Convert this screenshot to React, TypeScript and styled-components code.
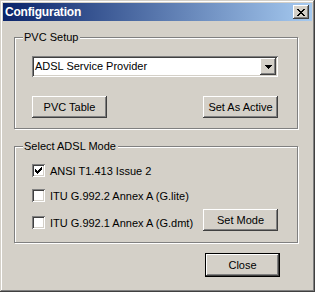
import React from 'react'
import styled, { createGlobalStyle } from 'styled-components'

const face = '#d4d0c8'

const GlobalStyle = createGlobalStyle`
  html, body {
    margin: 0;
    padding: 0;
    background: ${face};
  }
  body {
    font-family: "Liberation Sans", Arial, sans-serif;
    font-size: 11px;
    color: #000;
  }
`

const Window = styled.div`
  box-sizing: border-box;
  width: 315px;
  height: 292px;
  padding: 3px;
  display: flex;
  flex-direction: column;
  background: ${face};
  box-shadow:
    inset -1px -1px 0 #404040,
    inset 1px 1px 0 ${face},
    inset -2px -2px 0 #808080,
    inset 2px 2px 0 #fff;
`

const TitleBar = styled.div`
  height: 18px;
  display: flex;
  align-items: center;
  justify-content: space-between;
  padding: 0 3px 0 2px;
  background: linear-gradient(to right, #0a246a, #a6caf0);
`

const TitleText = styled.span`
  color: #fff;
  font-weight: bold;
  font-size: 12px;
  letter-spacing: -0.2px;
  line-height: 16px;
`

const raised = `
  background: ${face};
  box-shadow:
    inset -1px -1px 0 #404040,
    inset 1px 1px 0 #fff,
    inset -2px -2px 0 #808080,
    inset 2px 2px 0 ${face};
`

const sunken = `
  box-shadow:
    inset 1px 1px 0 #808080,
    inset -1px -1px 0 #fff,
    inset 2px 2px 0 #404040,
    inset -2px -2px 0 ${face};
`

const CaptionButton = styled.div`
  width: 16px;
  height: 14px;
  display: flex;
  align-items: center;
  justify-content: center;
  ${raised}
`

const Body = styled.div`
  flex: 1;
  display: flex;
  flex-direction: column;
  padding: 16px 14px 0 11px;
`

const Group = styled.div<{ $gap?: number }>`
  position: relative;
  margin-top: ${({ $gap }) => $gap ?? 0}px;
  border: 1px solid #808080;
  box-shadow: inset 1px 1px 0 #fff, 1px 1px 0 #fff;
  display: flex;
  flex-direction: column;
`

const GroupCaption = styled.span`
  position: absolute;
  top: -7px;
  left: 8px;
  padding: 0 2px 0 1px;
  background: ${face};
  line-height: 13px;
  white-space: nowrap;
`

const SetupContent = styled.div`
  padding: 18px 19px 10px 17px;
  display: flex;
  flex-direction: column;
  gap: 19px;
`

const ModeContent = styled.div`
  padding: 17px 19px 11px 17px;
  display: flex;
  flex-direction: column;
`

const Combo = styled.div`
  height: 21px;
  display: flex;
  align-items: center;
  background: #fff;
  padding: 2px;
  box-sizing: border-box;
  ${sunken}
`

const ComboText = styled.span`
  flex: 1;
  padding-left: 1px;
  line-height: 15px;
  white-space: nowrap;
`

const ComboArrow = styled.div`
  width: 16px;
  height: 17px;
  display: flex;
  align-items: center;
  justify-content: center;
  ${raised}
`

const ButtonRow = styled.div`
  display: flex;
  justify-content: space-between;
  align-items: flex-start;
`

const Button = styled.div<{ $default?: boolean }>`
  box-sizing: border-box;
  flex: none;
  width: 75px;
  height: ${({ $default }) => ($default ? 24 : 22)}px;
  display: flex;
  align-items: center;
  justify-content: center;
  white-space: nowrap;
  ${raised}
  ${({ $default }) =>
    $default &&
    `
    border: 1px solid #000;
  `}
`

const Option = styled.label<{ $top?: number }>`
  display: flex;
  align-items: center;
  gap: 5px;
  height: 13px;
  white-space: nowrap;
  margin-top: ${({ $top }) => $top ?? 0}px;
`

const Box = styled.span`
  width: 13px;
  height: 13px;
  flex: none;
  display: flex;
  align-items: center;
  justify-content: center;
  background: #fff;
  ${sunken}
`

const ModeRow = styled.div`
  display: flex;
  justify-content: space-between;
  align-items: flex-start;
  margin-top: 7px;
`

const Footer = styled.div`
  display: flex;
  justify-content: flex-end;
  padding: 10px 18px 0 0;
`

const Check = () => (
  <svg width="7" height="7" viewBox="0 0 7 7" shapeRendering="crispEdges">
    <path
      d="M6 0h1v1h-1zM5 1h2v1h-2zM0 2h1v1h-1zM4 2h3v1h-3zM0 3h2v1h-2zM3 3h3v1h-3zM0 4h5v1h-5zM1 5h3v1h-3zM2 6h1v1h-1z"
      fill="#000"
    />
  </svg>
)

const CheckOption = ({ label, checked, top }: { label: string; checked?: boolean; top?: number }) => (
  <Option $top={top}>
    <Box>{checked && <Check />}</Box>
    {label}
  </Option>
)

export default function App() {
  return (
    <>
      <GlobalStyle />
      <Window>
        <TitleBar>
          <TitleText>Configuration</TitleText>
          <CaptionButton>
            <svg width="8" height="7" viewBox="0 0 8 7" shapeRendering="crispEdges">
              <path
                d="M0 0h2v1h-2zM6 0h2v1h-2zM1 1h2v1h-2zM5 1h2v1h-2zM2 2h4v1h-4zM3 3h2v1h-2zM2 4h4v1h-4zM1 5h2v1h-2zM5 5h2v1h-2zM0 6h2v1h-2zM6 6h2v1h-2z"
                fill="#000"
              />
            </svg>
          </CaptionButton>
        </TitleBar>
        <Body>
          <Group>
            <GroupCaption>PVC Setup</GroupCaption>
            <SetupContent>
              <Combo>
                <ComboText>ADSL Service Provider</ComboText>
                <ComboArrow>
                  <svg width="7" height="4" viewBox="0 0 7 4" shapeRendering="crispEdges">
                    <path d="M0 0h7v1h-7zM1 1h5v1h-5zM2 2h3v1h-3zM3 3h1v1h-1z" fill="#000" />
                  </svg>
                </ComboArrow>
              </Combo>
              <ButtonRow>
                <Button>PVC Table</Button>
                <Button>Set As Active</Button>
              </ButtonRow>
            </SetupContent>
          </Group>
          <Group $gap={17}>
            <GroupCaption>Select ADSL Mode</GroupCaption>
            <ModeContent>
              <CheckOption label="ANSI T1.413 Issue 2" checked />
              <CheckOption label="ITU G.992.2 Annex A (G.lite)" top={12} />
              <ModeRow>
                <CheckOption label="ITU G.992.1 Annex A (G.dmt)" top={7} />
                <Button>Set Mode</Button>
              </ModeRow>
            </ModeContent>
          </Group>
          <Footer>
            <Button $default>Close</Button>
          </Footer>
        </Body>
      </Window>
    </>
  )
}
